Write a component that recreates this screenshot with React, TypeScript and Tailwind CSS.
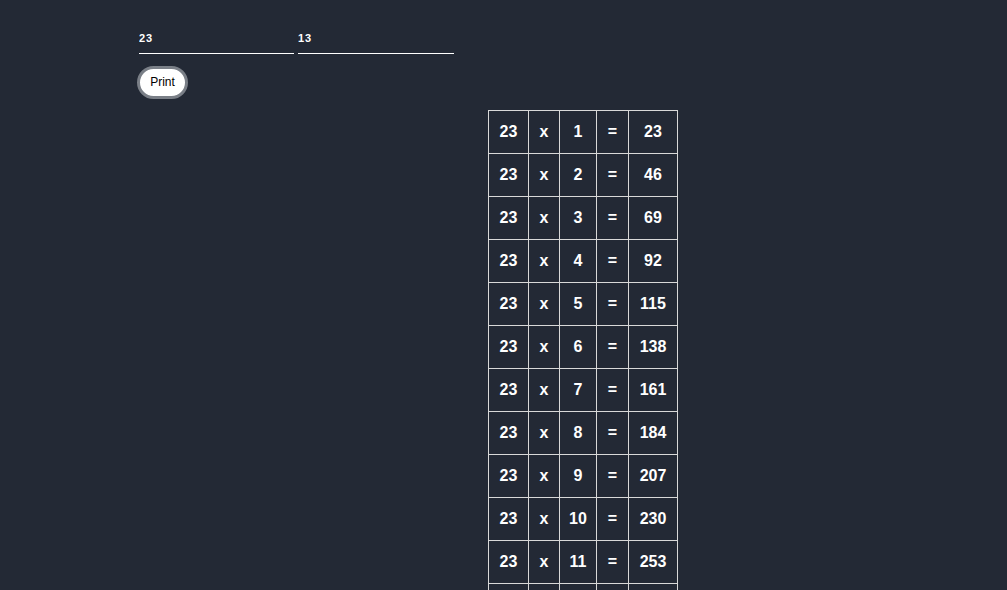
import React from 'react';

const App: React.FC = () => {
    const [base, setBase] = React.useState('23');
    const [count, setCount] = React.useState('13');

    const rows = React.useMemo(() => {
        const n = parseInt(base, 10) || 0;
        const c = parseInt(count, 10) || 0;
        return Array.from({ length: c }, (_, i) => ({ i: i + 1, v: n * (i + 1) }));
    }, [base, count]);

    const cell = "border border-[#d9d9d9] h-[43px] text-center text-[16px] font-bold text-white";

    return (
        <div className="min-h-[590px] bg-[#232935] font-['Liberation_Sans',Arial,sans-serif] pt-[30px] pl-[139px]">
            <div className="flex gap-[4px]">
                <input
                    value={base}
                    onChange={(e) => setBase(e.target.value)}
                    className="w-[155px] bg-transparent border-b border-white text-white text-[11px] font-bold tracking-[1px] pb-[6px] outline-none"
                />
                <input
                    value={count}
                    onChange={(e) => setCount(e.target.value)}
                    className="w-[156px] bg-transparent border-b border-white text-white text-[11px] font-bold tracking-[1px] pb-[6px] outline-none"
                />
            </div>

            <button className="mt-[12px] -ml-[2px] w-[51px] h-[33px] rounded-full bg-white border-[3px] border-[#7a7f87] text-[12px] text-black">
                Print
            </button>

            <table className="mt-[11px] ml-[349px] border-collapse">
                <tbody>
                    {rows.map((r) => (
                        <tr key={r.i}>
                            <td className={`${cell} w-[40px]`}>{base}</td>
                            <td className={`${cell} w-[31px]`}>x</td>
                            <td className={`${cell} w-[37px]`}>{r.i}</td>
                            <td className={`${cell} w-[32px]`}>=</td>
                            <td className={`${cell} w-[49px]`}>{r.v}</td>
                        </tr>
                    ))}
                </tbody>
            </table>
        </div>
    );
};

export default App;
